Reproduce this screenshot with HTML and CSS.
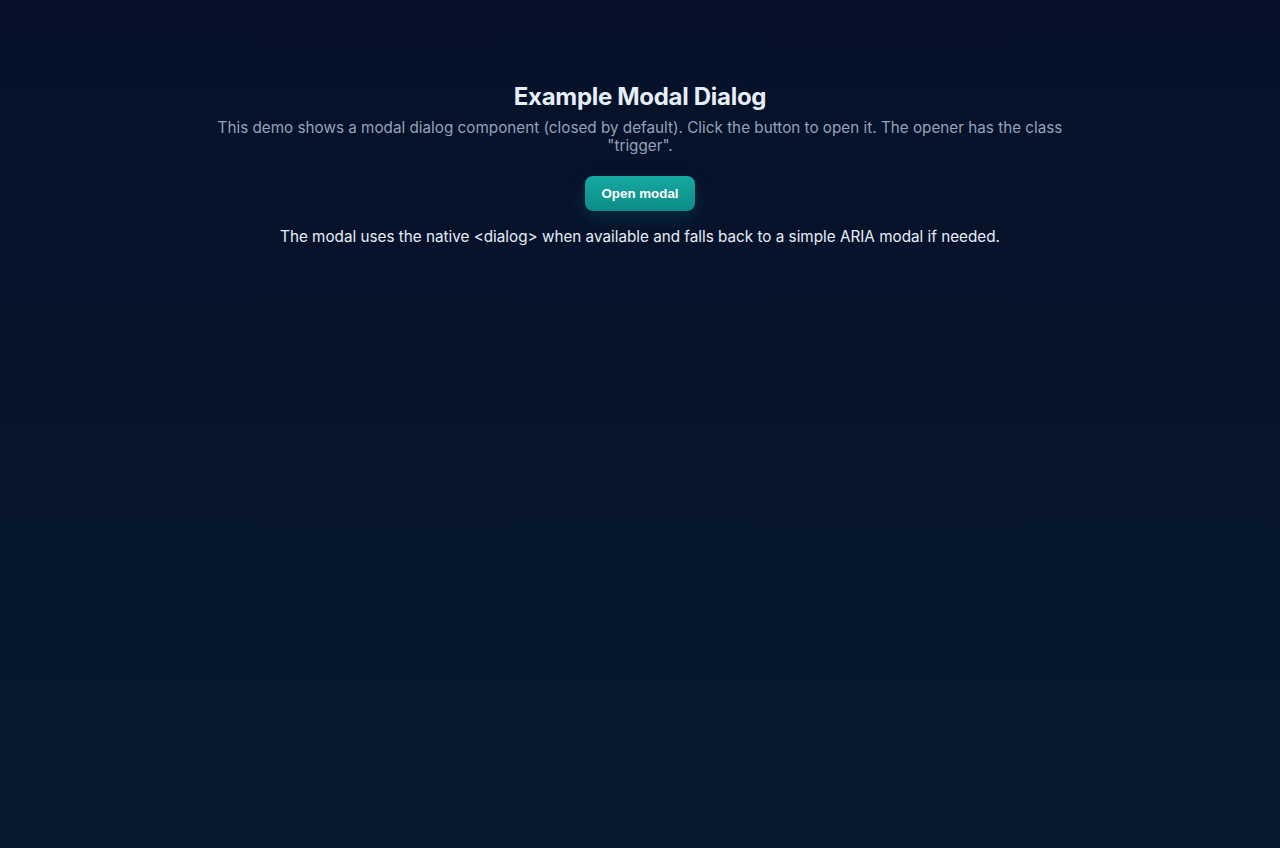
FILE: index.html
```html
<!DOCTYPE html>
<html lang="en">
<head>
<meta charset="utf-8">
<title>Example Modal Dialog</title>
<link rel="stylesheet" href="styles.css">
</head>
<body>
<main class="wrap">
  <h1 class="title">Example Modal Dialog</h1>
  <p class="lead">This demo shows a modal dialog component (closed by default). Click the button to open it. The opener has the class "trigger".</p>
  <button class="trigger" type="button">Open modal</button>
  <p class="note">The modal uses the native &lt;dialog&gt; when available and falls back to a simple ARIA modal if needed.</p>
</main>
</body>
</html>
```

FILE: styles.css
```css
html, body {
  margin: 0;
  padding: 0;
  min-height: 100%;
}
body {
  min-height: 848px;
  background: linear-gradient(180deg, #06102a 0%, #071a2b 100%);
  font-family: Inter, "Noto Sans", sans-serif;
  color: #e6eef8;
}
.wrap {
  max-width: 880px;
  margin: 0 auto;
  padding: 81px 0 0;
  display: flex;
  flex-direction: column;
  align-items: center;
  text-align: center;
}
.title {
  margin: 0;
  font-size: 24px;
  font-weight: 700;
  line-height: 32px;
  color: #e6eef8;
  letter-spacing: -0.3px;
}
.lead {
  margin: 6px 0 0;
  font-size: 15.25px;
  line-height: 18px;
  color: #94a3b8;
}
.trigger {
  margin-top: 21px;
  width: 110px;
  height: 35px;
  border: 0;
  border-radius: 8px;
  background: linear-gradient(180deg, #14a9a2 0%, #0e8c86 100%);
  color: #ffffff;
  font-family: "Liberation Sans", Arial, sans-serif;
  font-weight: 700;
  font-size: 13.33px;
  box-shadow: 0 6px 18px rgba(20, 169, 162, 0.18);
  cursor: pointer;
}
.note {
  margin: 16px 0 0;
  font-size: 15.25px;
  line-height: 20px;
  color: #e6eef8;
}
```
